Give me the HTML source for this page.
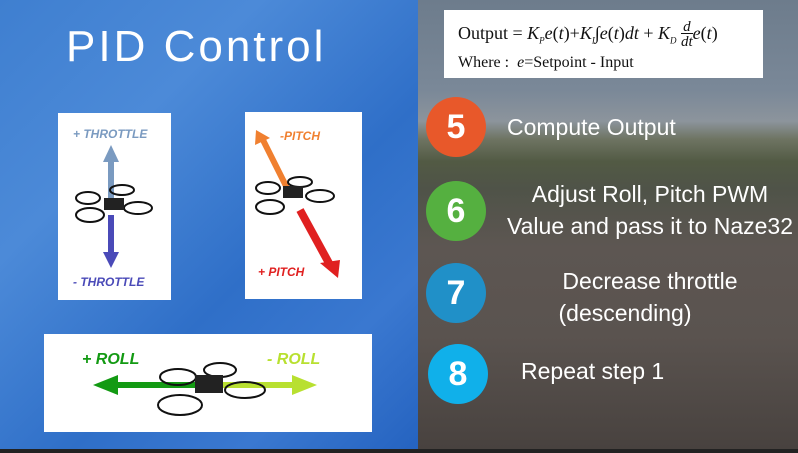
<!DOCTYPE html><html><head><style>
*{margin:0;padding:0;box-sizing:border-box}
body{width:798px;height:453px;overflow:hidden;position:relative;font-family:"Liberation Sans",sans-serif;background:#222}
#L{position:absolute;left:0;top:0;width:418px;height:449px;background:linear-gradient(135deg,#3f7fd0 0%,#4c8ad8 30%,#2f6fc8 60%,#3a78d0 80%,#2563c0 100%)}
#R{position:absolute;left:418px;top:0;width:380px;height:449px;background:linear-gradient(180deg,#6d7c8c 0%,#7a8898 20%,#8c949c 27%,#6e7462 31%,#525a44 36%,#4f5348 42%,#5d5652 55%,#5a534f 75%,#48423f 100%)}
.box{position:absolute;background:#fff}
.t{position:absolute;font-style:italic;font-weight:bold;font-size:12px}
.c{position:absolute;width:60px;height:60px;border-radius:50%;color:#fff;font-weight:bold;font-size:34px;text-align:center;line-height:60px;font-family:"Liberation Sans",sans-serif}
.s{position:absolute;color:#fff;font-size:23px;text-align:center;line-height:32px;white-space:nowrap}
</style></head><body>
<div id="L"></div><div id="R"></div>
<div style="position:absolute;left:66px;top:22px;color:#fff;font-size:44px;font-weight:normal;letter-spacing:3px">PID Control</div>
<div class="box" style="left:58px;top:113px;width:113px;height:187px"></div>
<div class="box" style="left:245px;top:112px;width:117px;height:187px"></div>
<div class="box" style="left:44px;top:334px;width:328px;height:98px"></div>
<div class="t" style="left:73px;top:127px;color:#7a9ac0">+ THROTTLE</div>
<div class="t" style="left:73px;top:275px;color:#4a4ab8">- THROTTLE</div>
<div class="t" style="left:280px;top:129px;color:#f08030">-PITCH</div>
<div class="t" style="left:258px;top:265px;color:#e02020">+ PITCH</div>
<div class="t" style="left:82px;top:351px;color:#139a13;font-size:16px">+ ROLL</div>
<div class="t" style="left:267px;top:351px;color:#b8e030;font-size:16px">- ROLL</div>
<svg style="position:absolute;left:0;top:0" width="418" height="449">
<line x1="111" y1="200" x2="111" y2="160" stroke="#7a9ac0" stroke-width="6"/><polygon points="103,162 111,145 119,162" fill="#7a9ac0"/>
<line x1="111" y1="215" x2="111" y2="255" stroke="#4a4ab8" stroke-width="6"/><polygon points="103,252 111,268 119,252" fill="#4a4ab8"/>
<line x1="287" y1="188" x2="263" y2="140" stroke="#f08030" stroke-width="6"/><polygon points="255,145 256,130 270,138" fill="#f08030"/>
<line x1="300" y1="210" x2="330" y2="265" stroke="#e02020" stroke-width="8"/><polygon points="320,263 340,260 338,278" fill="#e02020"/>
<line x1="115" y1="385" x2="200" y2="385" stroke="#139a13" stroke-width="6"/><polygon points="118,375 93,385 118,395" fill="#139a13"/>
<line x1="210" y1="385" x2="295" y2="385" stroke="#b8e030" stroke-width="6"/><polygon points="292,375 317,385 292,395" fill="#b8e030"/>
<g fill="none" stroke="#111" stroke-width="2">
<ellipse cx="88" cy="198" rx="12" ry="6"/><ellipse cx="122" cy="190" rx="12" ry="5"/><ellipse cx="90" cy="215" rx="14" ry="7"/><ellipse cx="138" cy="208" rx="14" ry="6"/>
<ellipse cx="268" cy="188" rx="12" ry="6"/><ellipse cx="300" cy="182" rx="12" ry="5"/><ellipse cx="270" cy="207" rx="14" ry="7"/><ellipse cx="320" cy="196" rx="14" ry="6"/>
<ellipse cx="178" cy="377" rx="18" ry="8"/><ellipse cx="220" cy="370" rx="16" ry="7"/><ellipse cx="180" cy="405" rx="22" ry="10"/><ellipse cx="245" cy="390" rx="20" ry="8"/></g>
<rect x="104" y="198" width="20" height="12" fill="#222"/><rect x="283" y="186" width="20" height="12" fill="#222"/><rect x="195" y="375" width="28" height="18" fill="#222"/>
</svg>
<div class="box" style="left:444px;top:10px;width:319px;height:68px;font-family:'Liberation Serif',serif;color:#111">
<div style="position:absolute;left:14px;top:10px;font-size:18px;white-space:nowrap">Output = <i>K<sub style="font-size:9px">P</sub>e</i>(<i>t</i>)+<i>K<sub style="font-size:9px">I</sub></i>∫<i>e</i>(<i>t</i>)<i>dt</i> + <i>K<sub style="font-size:9px">D</sub></i> <span style="display:inline-block;text-align:center;vertical-align:middle;font-size:15px;line-height:15px"><i>d</i><br><span style="border-top:1px solid #111"><i>dt</i></span></span><i>e</i>(<i>t</i>)</div>
<div style="position:absolute;left:14px;top:44px;font-size:16px;white-space:nowrap">Where : &nbsp;<i>e</i>=Setpoint - Input</div></div>
<div class="c" style="left:426px;top:97px;background:#e8582a">5</div>
<div class="c" style="left:426px;top:181px;background:#55b040">6</div>
<div class="c" style="left:426px;top:263px;background:#2090c8">7</div>
<div class="c" style="left:428px;top:344px;background:#10b0ea">8</div>
<div class="s" style="left:507px;top:111px">Compute Output</div>
<div class="s" style="left:490px;top:178px;width:320px">Adjust Roll, Pitch PWM<br>Value and pass it to Naze32</div>
<div class="s" style="left:520px;top:265px;width:260px">Decrease throttle<br><span style="margin-left:-50px">(descending)</span></div>
<div class="s" style="left:521px;top:355px">Repeat step 1</div>
</body></html>
